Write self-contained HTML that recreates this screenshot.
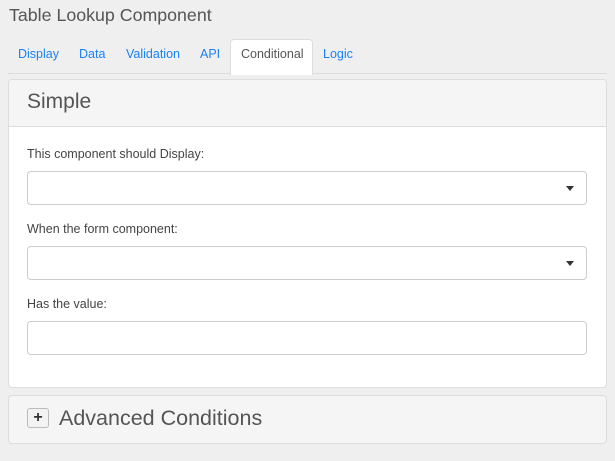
<!DOCTYPE html><html><head><style>
body{margin:0;width:615px;height:461px;background:#efefef;font-family:"Liberation Sans",sans-serif;position:relative;overflow:hidden}
.a{position:absolute}
.tab{position:absolute;top:47px;font-size:12.5px;color:#1a82f7}
.in{position:absolute;left:27px;width:558px;height:32px;border:1px solid #ccc;border-radius:4px;background:#fff}
.lb{position:absolute;left:27px;font-size:12.5px;color:#444}
.car{position:absolute;right:12px;top:14px;width:0;height:0;border-left:4px solid transparent;border-right:4px solid transparent;border-top:5px solid #333}
</style></head><body>
<div class="a" style="left:9px;top:5px;font-size:17.8px;color:#555">Table Lookup Component</div>
<div class="a" style="left:8px;top:73px;width:599px;height:1px;background:#ddd"></div>
<div class="tab" style="left:18px">Display</div>
<div class="tab" style="left:79px">Data</div>
<div class="tab" style="left:126px">Validation</div>
<div class="tab" style="left:200px">API</div>
<div class="a" style="left:230px;top:39px;width:81px;height:35px;background:#fff;border:1px solid #ddd;border-bottom:none;border-radius:4px 4px 0 0"></div>
<div class="tab" style="left:241px;color:#555">Conditional</div>
<div class="tab" style="left:323px">Logic</div>
<div class="a" style="left:8px;top:79px;width:597px;height:307px;background:#fff;border:1px solid #ddd;border-radius:4px;overflow:hidden">
<div style="height:46px;background:#f5f5f5;border-bottom:1px solid #ddd"></div></div>
<div class="a" style="left:27px;top:90px;font-size:21px;color:#555">Simple</div>
<div class="lb" style="top:147px">This component should Display:</div>
<div class="in" style="top:171px"><div class="car"></div></div>
<div class="lb" style="top:222px">When the form component:</div>
<div class="in" style="top:246px"><div class="car"></div></div>
<div class="lb" style="top:297px">Has the value:</div>
<div class="in" style="top:321px"></div>
<div class="a" style="left:8px;top:395px;width:597px;height:47px;background:#f5f5f5;border:1px solid #ddd;border-radius:4px"></div>
<div class="a" style="left:27px;top:408px;width:20px;height:18px;border:1px solid #bbb;border-radius:3px;background:#f3f3f3;font-size:16px;font-weight:bold;color:#333;text-align:center;line-height:17px">+</div>
<div class="a" style="left:59px;top:406px;font-size:21.5px;color:#555">Advanced Conditions</div>
</body></html>
